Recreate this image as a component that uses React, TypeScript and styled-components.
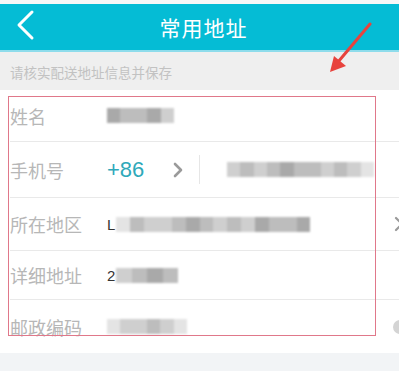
import styled, { createGlobalStyle } from "styled-components"

const GlobalStyle = createGlobalStyle`
	html,
	body {
		margin: 0;
		padding: 0;
		background: #f2f4f6;
	}

	body {
		font-family: "Noto Sans CJK SC", "Noto Sans", sans-serif;
	}
`

type Shade = "d" | "m" | "l" | "x"

const shades: Record<Shade, string> = {
	d: "#a9a9a9",
	m: "#bdbdbd",
	l: "#cfcfcf",
	x: "#e4e4e4",
}

// blurred (mosaic) values of the screenshot
const nameBlocks: Shade[] = ["d", "m", "m", "d", "l"]
const phoneBlocks: Shade[] = ["l", "m", "l", "m", "d", "m", "m", "l", "m", "l", "x"]
const regionBlocks: Shade[] = ["x", "m", "l", "l", "m", "d", "m", "l", "m", "l", "d", "m", "m", "d"]
const detailBlocks: Shade[] = ["l", "m", "d", "m"]
const zipBlocks: Shade[] = ["x", "l", "l", "m", "l", "x"]

const Mosaic = ({ blocks, width }: { blocks: Shade[]; width: number }) => (
	<MosaicStrip $width={width}>
		{blocks.map((b, i) => (
			<MosaicCell key={i} $shade={shades[b]} />
		))}
	</MosaicStrip>
)

const App = () => {
	return (
		<Page>
			<GlobalStyle />
			<StatusStrip />
			<Header>
				<BackButton>
					<svg width="20" height="32" viewBox="0 0 20 32">
						<polyline
							points="16,3 3,16 16,29"
							fill="none"
							stroke="#ffffff"
							strokeWidth="3"
							strokeLinecap="round"
							strokeLinejoin="round"
						/>
					</svg>
				</BackButton>
				<Title>常用地址</Title>
			</Header>

			<Notice>请核实配送地址信息并保存</Notice>

			<Form>
				<Row $h={52}>
					<Label>姓名</Label>
					<Mosaic blocks={nameBlocks} width={67} />
				</Row>
				<Row $h={56}>
					<Label>手机号</Label>
					<CountryCode>+86</CountryCode>
					<svg width="10" height="16" viewBox="0 0 10 16">
						<polyline
							points="2,2 8,8 2,14"
							fill="none"
							stroke="#9a9a9a"
							strokeWidth="2.6"
							strokeLinecap="round"
							strokeLinejoin="round"
						/>
					</svg>
					<VDivider />
					<Mosaic blocks={phoneBlocks} width={147} />
				</Row>
				<Row $h={53}>
					<Label>所在地区</Label>
					<Lead>L</Lead>
					<Mosaic blocks={regionBlocks} width={194} />
					<Spacer />
					<EdgeIcon width="10" height="16" viewBox="0 0 10 16">
						<polyline
							points="2,2 8,8 2,14"
							fill="none"
							stroke="#9a9a9a"
							strokeWidth="2.2"
							strokeLinecap="round"
							strokeLinejoin="round"
						/>
					</EdgeIcon>
				</Row>
				<Row $h={49}>
					<Label>详细地址</Label>
					<Lead>2</Lead>
					<Mosaic blocks={detailBlocks} width={62} />
				</Row>
				<Row $h={53} $last>
					<Label>邮政编码</Label>
					<Mosaic blocks={zipBlocks} width={80} />
					<Spacer />
					<ClearDot />
				</Row>
			</Form>

			<Annotation />
			<Arrow width="50" height="56" viewBox="0 0 50 56">
				<line x1="44" y1="2" x2="12" y2="40" stroke="#e8433d" strokeWidth="3" strokeLinecap="round" />
				<polygon points="4,50 8,34 20,44" fill="#e8433d" />
			</Arrow>
		</Page>
	)
}

export default App

const Page = styled.div`
	position: relative;
	width: 399px;
	height: 371px;
	overflow: hidden;
	background: #f2f4f6;
`

const StatusStrip = styled.div`
	height: 4px;
	background: #f7f7f7;
`

const Header = styled.header`
	position: relative;
	height: 46px;
	display: flex;
	align-items: center;
	justify-content: center;
	background: #05bcd5;
	border-bottom: 2px solid #8edceb;
`

const BackButton = styled.div`
	position: absolute;
	left: 16px;
	top: 5px;
	display: flex;
`

const Title = styled.h1`
	margin: 0;
	font-size: 21px;
	font-weight: 400;
	color: #ffffff;
	letter-spacing: 1px;
	padding-left: 8px;
`

const Notice = styled.div`
	height: 38px;
	display: flex;
	align-items: center;
	padding: 2px 0 0 10px;
	box-sizing: border-box;
	background: #efefef;
	font-size: 13.5px;
	color: #c2c2c2;
`

const Form = styled.section`
	background: #ffffff;
	padding-left: 10px;
`

const Row = styled.div<{ $h: number; $last?: boolean }>`
	height: ${(p) => p.$h}px;
	display: flex;
	align-items: center;
	box-sizing: border-box;
	border-bottom: ${(p) => (p.$last ? "none" : "1px solid #e9e9e9")};
`

const Label = styled.span`
	width: 97px;
	flex: none;
	font-size: 18px;
	color: #b7b7b7;
`

const CountryCode = styled.span`
	width: 66px;
	font-family: "Liberation Sans", sans-serif;
	font-size: 22px;
	color: #2fa9ba;
`

const VDivider = styled.span`
	width: 1px;
	height: 29px;
	margin: 0 27px 0 16px;
	background: #e6e6e6;
`

const Lead = styled.span`
	font-family: "Liberation Sans", sans-serif;
	font-size: 15px;
	color: #333333;
	margin-right: 1px;
`

const MosaicStrip = styled.div<{ $width: number }>`
	width: ${(p) => p.$width}px;
	height: 15px;
	display: flex;
	filter: blur(0.8px);
`

const MosaicCell = styled.span<{ $shade: string }>`
	flex: 1;
	background: ${(p) => p.$shade};
`

const Spacer = styled.span`
	flex: 1;
`

const EdgeIcon = styled.svg`
	margin-right: -5px;
	flex: none;
`

const ClearDot = styled.span`
	width: 14px;
	height: 14px;
	margin-right: -8px;
	border-radius: 50%;
	background: #d4d4d4;
`

const Annotation = styled.div`
	position: absolute;
	left: 8px;
	top: 96px;
	width: 368px;
	height: 240px;
	box-sizing: border-box;
	border: 1.5px solid #e0788a;
	pointer-events: none;
`

const Arrow = styled.svg`
	position: absolute;
	left: 326px;
	top: 22px;
`
